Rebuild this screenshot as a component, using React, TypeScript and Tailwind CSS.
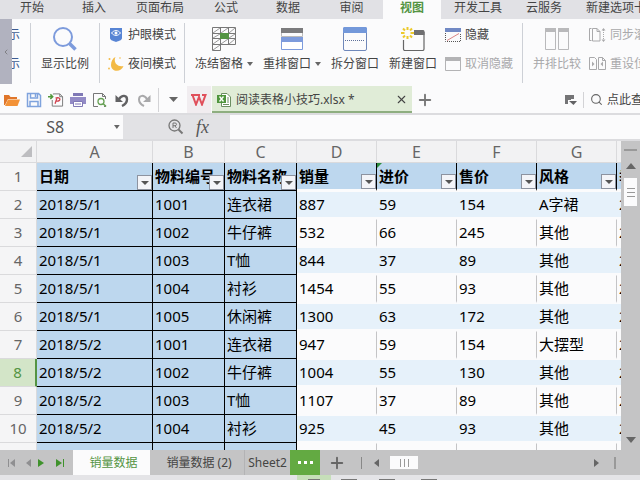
import type { ReactNode } from 'react';
import { ChevronLeft, Plus, Search, X } from 'lucide-react';

const TABS = [
  { label: '开始', width: 'w-16' },
  { label: '插入', width: 'w-[60px]' },
  { label: '页面布局', width: 'w-[72px]' },
  { label: '公式', width: 'w-[60px]' },
  { label: '数据', width: 'w-[64px]' },
  { label: '审阅', width: 'w-[63px]' },
  { label: '视图', width: 'w-[58px]', active: true },
  { label: '开发工具', width: 'w-[74px]' },
  { label: '云服务', width: 'w-[58px]' },
  { label: '新建选项卡', width: 'w-[86px]' },
];

const COLUMNS = [
  { letter: 'A', title: '日期', width: 'w-[116px]' },
  { letter: 'B', title: '物料编号', width: 'w-[72px]' },
  { letter: 'C', title: '物料名称', width: 'w-[72px]' },
  { letter: 'D', title: '销量', width: 'w-[80px]' },
  { letter: 'E', title: '进价', width: 'w-[80px]', flagged: true },
  { letter: 'F', title: '售价', width: 'w-[80px]' },
  { letter: 'G', title: '风格', width: 'w-[80px]' },
  { letter: 'H', title: '季节', width: 'w-[80px]' },
];

const ROWS = [
  ['2018/5/1', '1001', '连衣裙', '887', '59', '154', 'A字裙', '2018'],
  ['2018/5/1', '1002', '牛仔裤', '532', '66', '245', '其他', '2018'],
  ['2018/5/1', '1003', 'T恤', '844', '37', '89', '其他', '2018'],
  ['2018/5/1', '1004', '衬衫', '1454', '55', '93', '其他', '2018'],
  ['2018/5/1', '1005', '休闲裤', '1300', '63', '172', '其他', '2018'],
  ['2018/5/2', '1001', '连衣裙', '947', '59', '154', '大摆型', '2018'],
  ['2018/5/2', '1002', '牛仔裤', '1004', '55', '130', '其他', '2018'],
  ['2018/5/2', '1003', 'T恤', '1107', '37', '89', '其他', '2018'],
  ['2018/5/2', '1004', '衬衫', '925', '45', '93', '其他', '2018'],
  ['', '', '', '', '', '', '', ''],
];

const FROZEN = 3;
const SELECTED_ROW = 8;

function Caret({ className = 'text-[#666]' }: { className?: string }) {
  return (
    <svg width="6" height="4" viewBox="0 0 6 4" className={className}>
      <path d="M0 0h6L3 4z" fill="currentColor" />
    </svg>
  );
}

function Divider() {
  return <div className="w-px shrink-0 self-stretch bg-[#cdd0d6]" />;
}

function BigButton({ icon, label, menu, muted }: { icon: ReactNode; label: string; menu?: boolean; muted?: boolean }) {
  return (
    <button
      className={`flex shrink-0 flex-col items-center gap-[5px] whitespace-nowrap leading-4 ${muted ? 'text-[#a9a9ab]' : ''}`}
    >
      {icon}
      <span className="flex items-center gap-1">
        {label}
        {menu && <Caret />}
      </span>
    </button>
  );
}

function SmallButton({ icon, label, muted }: { icon: ReactNode; label: string; muted?: boolean }) {
  return (
    <button
      className={`flex items-center gap-1 whitespace-nowrap leading-4 ${muted ? 'text-[#a9a9ab]' : ''}`}
    >
      {icon}
      {label}
    </button>
  );
}

function ZoomIcon() {
  return (
    <svg width="24" height="24" viewBox="0 0 24 24" fill="none">
      <circle cx="10" cy="10" r="9" stroke="#7d9bdc" strokeWidth="2" />
      <path d="M16.500 16.500l6 6" stroke="#7d9bdc" strokeWidth="3.500" />
    </svg>
  );
}

function EyeShieldIcon() {
  return (
    <svg width="16" height="16" viewBox="0 0 16 16" fill="none">
      <path d="M2 1h12v10c0 2-3 3-6 4-3-1-6-2-6-4z" fill="#5784d4" />
      <path d="M3.500 6C6 2.800 10 2.800 12.500 6 10 9.200 6 9.200 3.500 6z" stroke="#fff" strokeWidth="1" />
      <circle cx="8" cy="6" r="1.500" fill="#fff" />
    </svg>
  );
}

function MoonIcon() {
  return (
    <svg width="16" height="16" viewBox="0 0 16 16" fill="#f3ba45">
      <path d="M7.500 1C5 6 9 11.500 15.500 10 13.500 16.500 3 16.500 3 9 3 5 5 2 7.500 1z" />
      <circle cx="1.500" cy="3" r="1" />
      <circle cx="12" cy="2" r=".8" />
      <circle cx="1" cy="12.500" r=".9" />
    </svg>
  );
}

function FreezeIcon() {
  return (
    <svg width="24" height="24" viewBox="0 0 24 24" fill="none" stroke="#777" strokeWidth="1">
      <path d="M8.500 17.500v6H.5V.5h23v17H.5M.5 6.500h23M.5 11.500h23M8.500.5v17M16.500.5v17" />
      <path d="M1 6l7-5M9 6l7-5M17 6l6-5M1 11l7-4M17 11l6-4M1 17l7-5M9 17l7-5M17 17l6-5M1 23l7-5" stroke="#999" />
      <path d="M8 6h9v6H8z" fill="#549443" stroke="none" />
    </svg>
  );
}

function ArrangeIcon() {
  return (
    <svg width="22" height="24" viewBox="0 0 22 24" fill="none">
      <path d="M.5 1.500h21v8H.5z" stroke="#bbb" />
      <path d="M0 1h22v5H0z" fill="#7b7b7d" />
      <path d="M.5 10.500h21v12H.5z" fill="#fff" stroke="#7d9bdc" />
      <path d="M0 10h22v5H0z" fill="#7d9bdc" />
    </svg>
  );
}

function SplitIcon() {
  return (
    <svg width="24" height="24" viewBox="0 0 24 24" fill="none">
      <rect x=".5" y=".5" width="23" height="23" rx="1.500" fill="#fbfbfc" stroke="#7088ba" />
      <path d="M1 0h22l1 1v5H0V1z" fill="#7398da" />
      <path d="M2 13.500h20" stroke="#5d6f99" strokeDasharray="1 1" />
    </svg>
  );
}

function NewWindowIcon() {
  return (
    <svg width="24" height="24" viewBox="0 0 24 24" fill="none">
      <path d="M2.500 13v9q0 1.500 1.500 1.500h17.500q1.500 0 1.500-1.500V5" stroke="#666" strokeWidth="1.200" />
      <path d="M13 3h9.500l1 1v4H13z" fill="#6f6f71" />
      <path d="M6.500 0v3M6.500 9v3M0 6h3.500M9.500 6H13M2 1.500l2 2M9 8.500l2 2M11 1.500l-2 2M2 10.500l2-2" stroke="#ecc92b" strokeWidth="2" />
    </svg>
  );
}

function HideIcon() {
  return (
    <svg width="16" height="16" viewBox="0 0 16 16" fill="none">
      <path d="M.5 6v8.500h15V6" stroke="#555" strokeDasharray="1 1" />
      <path d="M0 1h16v4H0z" fill="#7189c4" />
      <path d="M2 13.500L14 6.500" stroke="#d98585" />
    </svg>
  );
}

function UnhideIcon() {
  return (
    <svg width="16" height="16" viewBox="0 0 16 16" fill="none">
      <path d="M.5 1.500h15v13H.5z" stroke="#b3b3b5" />
      <path d="M0 1h16v4H0z" fill="#b3b3b5" />
    </svg>
  );
}

function CompareIcon() {
  return (
    <svg width="24" height="24" viewBox="0 0 24 24" fill="none">
      <path d="M.5 1.500h10v21H.5zM13.500 1.500h10v21h-10z" stroke="#b9b9bb" />
      <path d="M0 1h11v4H0zM13 1h11v4H13z" fill="#b9b9bb" />
    </svg>
  );
}

function SyncScrollIcon() {
  return (
    <svg width="17" height="16" viewBox="0 0 17 16" fill="none" stroke="#a9a9ab">
      <path d="M2.500 13.500h-2v-12h2M3.500 1.500H8l3 3v9.500H3.500zM8 1.500v3h3" />
      <path d="M14.500 3v10" strokeDasharray="1 1" />
      <path d="M12.500 3.500l2-2.500 2 2.500zM12.500 12.500l2 2.500 2-2.500z" fill="#a9a9ab" stroke="none" />
    </svg>
  );
}

function ResetIcon() {
  return (
    <svg width="17" height="16" viewBox="0 0 17 16" fill="none" stroke="#a9a9ab">
      <path d="M.5 1.500h5l2 2v10h-7zM9.500 1.500h4l3 3v9h-7zM13.500 1.500v3h3" />
      <path d="M3 5.500v5L5.500 8zM14 5.500v5L11.500 8z" fill="#a9a9ab" stroke="none" />
    </svg>
  );
}

function OpenIcon() {
  return (
    <svg width="16" height="16" viewBox="0 0 16 16">
      <path d="M0 13V3h5l1.500 2H13v2H4L1 13z" fill="#e0762a" />
      <path d="M4 7.500h12L13.500 14H1z" fill="#f39237" />
    </svg>
  );
}

function SaveIcon() {
  return (
    <svg width="16" height="16" viewBox="0 0 16 16" fill="none" stroke="#7fa3dd" strokeWidth="1.500">
      <path d="M1.500 1.500h11l2 2v11h-13zM4.500 2v4h7V2M4 14.500v-5h8v5" />
      <path d="M9.500 2v3" />
    </svg>
  );
}

function PdfIcon() {
  return (
    <svg width="17" height="16" viewBox="0 0 17 16" fill="none">
      <path d="M5.500 2V1.500h7l3 3v10h-11V8" stroke="#777" />
      <path d="M12.500 1.500v3h3" stroke="#777" />
      <path d="M0 4.500h5M2.500 2L5 4.500 2.500 7" stroke="#51983d" strokeWidth="1.600" />
      <path d="M8 6c6-2 6 4 1 3M9.500 6l-2 6" stroke="#d0404d" strokeWidth="1.400" />
    </svg>
  );
}

function PrintIcon() {
  return (
    <svg width="16" height="16" viewBox="0 0 16 16" fill="none">
      <path d="M3 1h10v3H3z" fill="#8079b6" />
      <path d="M0 5h16v7H0z" fill="#938bc6" />
      <path d="M3.500 9.500h9v5h-9z" fill="#fff" stroke="#8079b6" />
      <path d="M5 12h6" stroke="#8079b6" />
    </svg>
  );
}

function PreviewIcon() {
  return (
    <svg width="16" height="16" viewBox="0 0 16 16" fill="none">
      <path d="M6 14.500H1.500v-13h9l3 3V7M13.500 13v1.500H12M10.500 1.500v3h3" stroke="#777" />
      <circle cx="9" cy="9.500" r="3" stroke="#67a155" strokeWidth="1.300" />
      <path d="M11 11.500l3 3" stroke="#67a155" strokeWidth="1.600" />
    </svg>
  );
}

function UndoIcon() {
  return (
    <svg width="14" height="14" viewBox="0 0 14 14" fill="none">
      <path d="M4 6C7 1.500 12 2 12 6.500 12 9.500 10 11.500 7 13" stroke="#626264" strokeWidth="2.400" />
      <path d="M.5 2v7H8z" fill="#626264" />
    </svg>
  );
}

function RedoIcon() {
  return (
    <svg width="14" height="14" viewBox="0 0 14 14" fill="none">
      <path d="M10 6C7 1.500 2 2 2 6.500 2 9.500 4 11.500 7 13" stroke="#a9a9ab" strokeWidth="2" />
      <path d="M13.500 2v7H6z" fill="#a9a9ab" />
    </svg>
  );
}

function LogoIcon() {
  return (
    <svg width="16" height="12" viewBox="0 0 16 12" fill="none" stroke="#e04f5b" strokeWidth="2">
      <path d="M0 1h9M1.500 1L5 10.500 8 3l3 7.500L14.500 1H11" />
    </svg>
  );
}

function SheetFileIcon() {
  return (
    <svg width="14" height="14" viewBox="0 0 14 14" fill="none">
      <path d="M4.500.5H10l3.500 3.500v9.500h-9z" fill="#fff" stroke="#6c8e62" />
      <path d="M10 5h2M10 7h2M10 9h2M6 11.500h6" stroke="#6c8e62" />
      <path d="M0 2h9v8H0z" fill="#4f963d" />
      <path d="M2.500 3.500l4 5M6.500 3.500l-4 5" stroke="#fff" strokeWidth="1.300" />
    </svg>
  );
}

function RegisteredIcon() {
  return (
    <svg width="16" height="16" viewBox="0 0 16 16" fill="none" stroke="#777">
      <circle cx="6.500" cy="6.500" r="5.500" strokeWidth="1.300" />
      <path d="M10.500 10.500l4 4" strokeWidth="2" />
      <path d="M5 9V4h2q1.500 0 1.500 1.300T7 6.700H5M7 7l1.500 2" />
    </svg>
  );
}

function LayoutIcon() {
  return (
    <svg width="12" height="12" viewBox="0 0 12 12">
      <path d="M0 1h9v4H6v1H3v4H0z" fill="#747476" />
      <path d="M4 7h8l-3.500 4z" fill="#626264" />
    </svg>
  );
}

function Ribbon() {
  return (
    <div className="flex h-[67px] shrink-0 overflow-hidden pb-[2px]">
      <button aria-label="向左滚动" className="flex w-3 shrink-0 items-center justify-center bg-[#b1b2bf] text-[#666]">
        <ChevronLeft size={8} />
      </button>
      <div className="flex w-[18px] shrink-0 flex-col gap-[13px] overflow-hidden pt-2 text-[#3f5b91]">
        <span className="-ml-1 leading-4">示</span>
        <span className="-ml-1 leading-4">示</span>
      </div>
      <div className="flex min-w-0 flex-1 items-start overflow-hidden pt-1">
        <div className="flex h-[60px] shrink-0">
          <Divider />
          <div className="flex w-[68px] justify-center pt-1"><BigButton icon={<ZoomIcon />} label="显示比例" /></div>
          <Divider />
          <div className="flex w-[84px] flex-col gap-[13px] pl-2 pt-1">
            <SmallButton icon={<EyeShieldIcon />} label="护眼模式" />
            <SmallButton icon={<MoonIcon />} label="夜间模式" />
          </div>
          <Divider />
          <div className="flex items-start gap-[10px] pl-[10px] pt-1">
            <BigButton icon={<FreezeIcon />} label="冻结窗格" menu />
            <BigButton icon={<ArrangeIcon />} label="重排窗口" menu />
            <BigButton icon={<SplitIcon />} label="拆分窗口" />
            <BigButton icon={<NewWindowIcon />} label="新建窗口" />
          </div>
          <div className="flex w-[85px] flex-col gap-[13px] pl-2 pt-1">
            <SmallButton icon={<HideIcon />} label="隐藏" />
            <SmallButton icon={<UnhideIcon />} label="取消隐藏" muted />
          </div>
          <Divider />
          <div className="flex w-16 items-start pl-[10px] pt-1"><BigButton icon={<CompareIcon />} label="并排比较" muted /></div>
          <div className="flex flex-col gap-[13px] pl-[2px] pt-1">
            <SmallButton icon={<SyncScrollIcon />} label="同步滚动" muted />
            <SmallButton icon={<ResetIcon />} label="重设位置" muted />
          </div>
        </div>
      </div>
    </div>
  );
}

function QuickBar() {
  const tools = [
    { label: '打开', icon: <OpenIcon /> },
    { label: '保存', icon: <SaveIcon /> },
    { label: '输出为PDF', icon: <PdfIcon /> },
    { label: '打印', icon: <PrintIcon /> },
    { label: '打印预览', icon: <PreviewIcon /> },
    { label: '撤销', icon: <UndoIcon /> },
    { label: '恢复', icon: <RedoIcon /> },
  ];
  return (
    <div className="flex h-[27px] shrink-0 items-center overflow-hidden">
      <div className="flex shrink-0 items-center gap-[6px] pl-1">
        {tools.map((t) => (
          <button key={t.label} aria-label={t.label} className="flex w-4 justify-center">
            {t.icon}
          </button>
        ))}
      </div>
      <div className="ml-[6px] h-6 w-px bg-[#d3d3d6]" />
      <button aria-label="更多" className="flex w-7 justify-center">
        <svg width="9" height="5" viewBox="0 0 9 5"><path d="M0 0h9L4.500 5z" fill="#666" /></svg>
      </button>
      <button aria-label="WPS" className="mr-px flex h-full w-6 items-center justify-center bg-[#f1edf0]">
        <LogoIcon />
      </button>
      <div className="flex h-full w-[200px] shrink-0 items-center border-b-2 border-[#8eae80] bg-[#e0ecd7] pl-[5px] pr-1 pt-[2px]">
        <SheetFileIcon />
        <span className="ml-[5px] flex-1">阅读表格小技巧.xlsx *</span>
        <button aria-label="关闭"><X size={13} strokeWidth={2} /></button>
      </div>
      <button aria-label="新建" className="ml-1 text-[#777]"><Plus size={18} strokeWidth={2.5} /></button>
      <div className="flex-1" />
      <button aria-label="窗口布局"><LayoutIcon /></button>
      <div className="mx-[6px] h-4 w-px bg-[#d3d3d6]" />
      <button className="flex w-[50px] shrink-0 items-center gap-1 overflow-hidden whitespace-nowrap">
        <Search size={13} strokeWidth={2} className="shrink-0 text-[#666]" />
        点此查找命令
      </button>
    </div>
  );
}

function FormulaBar() {
  return (
    <div className="flex h-7 shrink-0 border-y-2 border-[#dcdcdf] bg-[#e2e2e5]">
      <div className="flex w-[123px] items-center bg-[#fbfbfc] pr-[3px]">
        <input
          aria-label="名称框"
          defaultValue="S8"
          className="w-full min-w-0 bg-transparent pr-1 text-center text-base leading-5 text-[#555] outline-none"
        />
        <Caret />
      </div>
      <button aria-label="查找" className="ml-[45px]"><RegisteredIcon /></button>
      <button
        aria-label="插入函数"
        className="ml-3 w-[34px] text-left font-['Liberation_Serif',serif] text-lg leading-5 italic text-[#555]"
      >
        fx
      </button>
      <input aria-label="编辑栏" className="min-w-0 flex-1 bg-[#fbfbfc] outline-none" />
    </div>
  );
}

function FilterButton({ title }: { title: string }) {
  return (
    <button
      aria-label={`筛选${title}`}
      className="absolute bottom-0 right-0 flex size-[15px] items-center justify-center border border-[#8d93a0] bg-[#f3f4f8]"
    >
      <svg width="8" height="4" viewBox="0 0 8 4"><path d="M0 0h8L4 4z" fill="#555" /></svg>
    </button>
  );
}

function cellClass(col: number, row: number) {
  if (col < FROZEN) return 'border-b border-r border-black bg-[#bdd7ee] pb-[2px]';
  return row % 2 === 0
    ? 'border-b-2 border-t border-[#fbfbfc] bg-[#e6f1fa] pb-px'
    : 'border-b-2 border-t border-r border-y-[#fbfbfc] border-r-[#c4c4c6] bg-[#fbfbfc] pb-px';
}

function Grid() {
  return (
    <div className="min-w-0 flex-1 overflow-hidden">
      <table className="w-[677px] table-fixed border-separate border-spacing-0 text-[15px] text-black">
        <thead>
          <tr className="h-[22px] text-base leading-5 text-[#666]">
            <th className="w-[37px] border-b border-r border-[#dadadc] bg-[#f2f2f3] p-0">
              <svg width="11" height="11" viewBox="0 0 11 11" className="ml-[21px]"><path d="M11 0v11H0z" fill="#bdbdc0" /></svg>
            </th>
            {COLUMNS.map((c) => (
              <th key={c.letter} className={`${c.width} border-b border-r border-[#dadadc] bg-[#f2f2f3] p-0 font-normal`}>
                {c.letter}
              </th>
            ))}
          </tr>
        </thead>
        <tbody>
          <tr className="h-7">
            <th className="border-b border-r border-[#dadadc] bg-[#f5f5f6] p-0 pb-[2px] font-normal leading-5 text-[#666]">1</th>
            {COLUMNS.map((c, i) => (
              <th
                key={c.letter}
                className={`relative overflow-hidden whitespace-nowrap border-r border-r-black bg-[#bdd7ee] p-0 pl-[2px] text-left font-bold leading-5 ${
                  i < FROZEN ? 'border-b border-b-black pb-px' : 'border-b-2 border-b-[#fbfbfc]'
                }`}
              >
                {c.flagged && <span className="absolute left-0 top-0 border-r-[5px] border-t-[5px] border-r-transparent border-t-[#2b8c3e]" />}
                {c.title}
                <FilterButton title={c.title} />
              </th>
            ))}
          </tr>
          {ROWS.map((cells, r) => {
            const n = r + 2;
            return (
              <tr key={n} className="h-7">
                <th
                  className={`border-b p-0 pb-[2px] font-normal leading-5 ${
                    n === SELECTED_ROW
                      ? 'border-b-[#dadadc] border-r-2 border-r-[#549443] bg-[#d3e5c8] text-[#549443]'
                      : 'border-r border-[#dadadc] bg-[#f5f5f6] text-[#666]'
                  }`}
                >
                  {n}
                </th>
                {cells.map((value, c) => (
                  <td key={COLUMNS[c].letter} className={`overflow-hidden whitespace-nowrap p-0 pl-[2px] leading-5 ${cellClass(c, n)}`}>
                    {value}
                  </td>
                ))}
              </tr>
            );
          })}
        </tbody>
      </table>
    </div>
  );
}

function VerticalScroll() {
  return (
    <div className="flex w-[19px] shrink-0 flex-col items-center bg-[#c4c4c5] pb-[7px] pt-2">
      <div className="h-[2px] w-[13px] bg-[#999]" />
      <svg width="10" height="6" viewBox="0 0 10 6" className="mt-3"><path d="M0 6L5 0l5 6z" fill="#666" /></svg>
      <div className="mt-[9px] flex h-7 w-[13px] flex-col items-center justify-center gap-[3px] bg-[#fbfbfc]">
        <div className="h-px w-2 bg-[#999]" />
        <div className="h-px w-2 bg-[#999]" />
        <div className="h-px w-2 bg-[#999]" />
      </div>
      <div className="flex-1" />
      <svg width="10" height="6" viewBox="0 0 10 6"><path d="M0 0h10L5 6z" fill="#666" /></svg>
    </div>
  );
}

function SheetBar() {
  return (
    <div className="flex h-[25px] shrink-0 items-center overflow-hidden whitespace-nowrap bg-[#c4c4c5]">
      <div className="flex w-[73px] shrink-0 items-center pl-2">
        <button aria-label="第一张">
          <svg width="8" height="8" viewBox="0 0 8 8" fill="#8f8f91"><path d="M0 0h1v8H0zM7 0v8L2 4z" /></svg>
        </button>
        <button aria-label="上一张" className="ml-[9px]">
          <svg width="6" height="8" viewBox="0 0 6 8"><path d="M6 0v8L1 4z" fill="#8f8f91" /></svg>
        </button>
        <button aria-label="下一张" className="ml-[7px]">
          <svg width="6" height="8" viewBox="0 0 6 8"><path d="M0 0v8l6-4z" fill="#3f922c" /></svg>
        </button>
        <button aria-label="最后一张" className="ml-3">
          <svg width="8" height="8" viewBox="0 0 8 8" fill="#3f922c"><path d="M0 0v8l6-4zM7 0h1v8H7z" /></svg>
        </button>
      </div>
      <button className="h-full w-[77px] shrink-0 bg-[#fbfbfc] pl-1 text-[#549443]">销量数据</button>
      <button className="h-full w-[95px] shrink-0 border-r border-[#b3b3b5] pl-1">销量数据 (2)</button>
      <button className="h-full w-[45px] shrink-0">Sheet2</button>
      <button aria-label="更多工作表" className="flex h-full w-[30px] shrink-0 items-center justify-center gap-[3px] bg-[#63aa42]">
        <span className="size-[3px] bg-white" />
        <span className="size-[3px] bg-white" />
        <span className="size-[3px] bg-white" />
      </button>
      <button aria-label="新建工作表" className="ml-2 text-[#666]"><Plus size={18} strokeWidth={2.5} /></button>
      <div className="ml-[15px] h-3 w-px bg-[#888]" />
      <svg width="5" height="8" viewBox="0 0 5 8" className="ml-3"><path d="M5 0v8L0 4z" fill="#666" /></svg>
      <div className="ml-[11px] flex h-[13px] w-7 items-center justify-center gap-[3px] bg-[#fbfbfc]">
        <div className="h-2 w-px bg-[#999]" />
        <div className="h-2 w-px bg-[#999]" />
        <div className="h-2 w-px bg-[#999]" />
      </div>
      <div className="flex-1" />
      <svg width="5" height="8" viewBox="0 0 5 8"><path d="M0 0v8l5-4z" fill="#666" /></svg>
      <div className="ml-[15px] mr-6 h-3 w-[2px] bg-[#999]" />
    </div>
  );
}

export default function App() {
  return (
    <div className="flex h-screen w-full flex-col overflow-hidden bg-[#fbfbfc] font-['Noto_Sans','Noto_Sans_CJK_SC',sans-serif] text-xs text-[#444]">
      <nav className="flex h-[19px] shrink-0 overflow-hidden bg-[#e1e1e5]">
        {TABS.map((t) => (
          <button
            key={t.label}
            className={`h-full shrink-0 whitespace-nowrap pb-[3px] leading-4 ${t.width} ${
              t.active ? 'bg-[#fbfbfc] font-bold text-[#549443]' : ''
            }`}
          >
            {t.label}
          </button>
        ))}
      </nav>
      <Ribbon />
      <QuickBar />
      <FormulaBar />
      <div className="flex min-h-0 flex-1">
        <Grid />
        <VerticalScroll />
      </div>
      <SheetBar />
      <div className="flex h-[5px] shrink-0 items-end bg-[#e4e4e7] pl-[297px]">
        <div className="flex h-full w-[34px] items-end justify-center bg-[#c6dfb9]"><div className="h-px w-3 bg-[#777]" /></div>
        <div className="ml-[10px] h-px w-4 bg-[#777]" />
        <div className="ml-[22px] h-px w-4 bg-[#777]" />
        <div className="ml-[26px] h-px w-4 bg-[#777]" />
      </div>
    </div>
  );
}
